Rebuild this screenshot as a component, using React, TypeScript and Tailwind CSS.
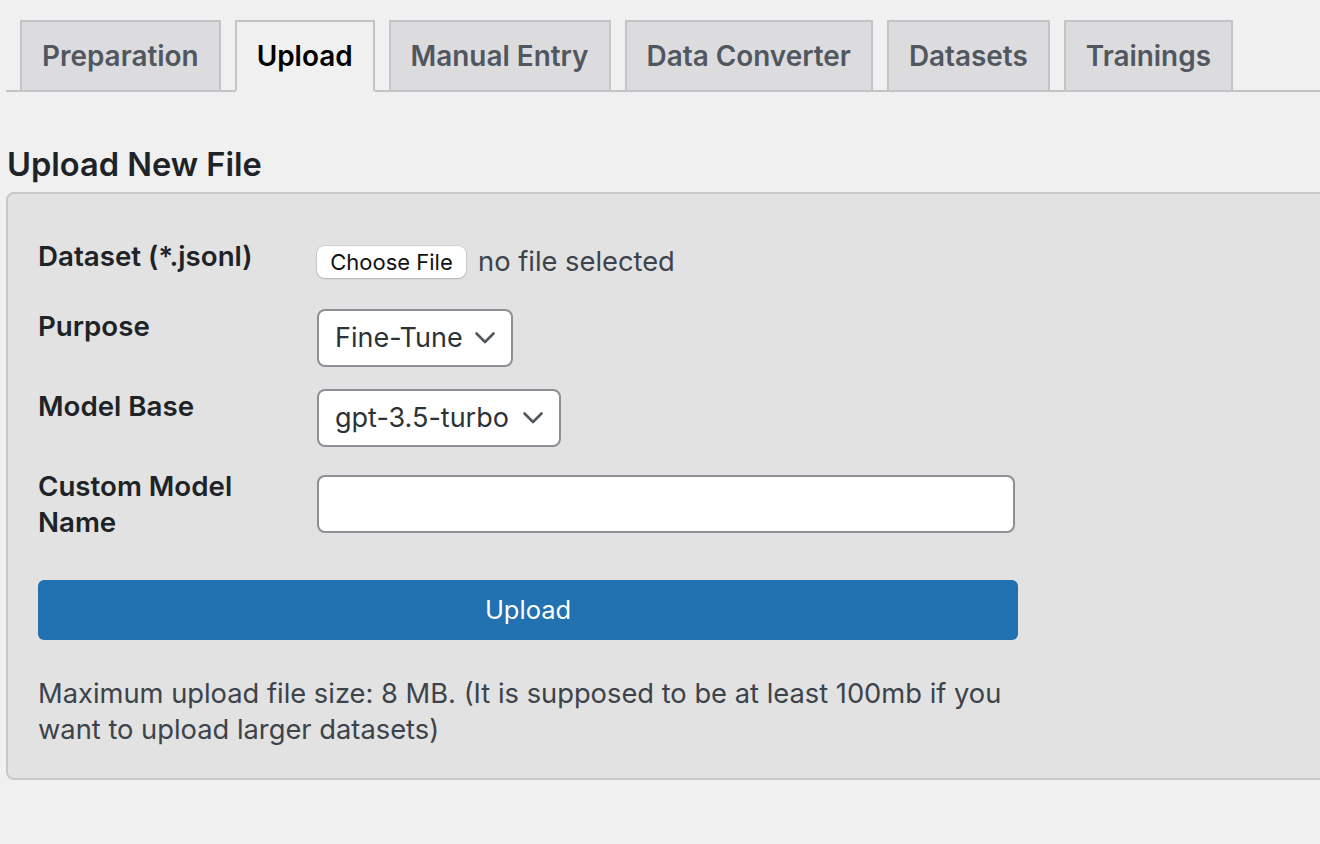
import React from 'react'

const tabs = ['Preparation', 'Upload', 'Manual Entry', 'Data Converter', 'Datasets', 'Trainings']

const Chevron = () => (
    <svg width="20" height="14" viewBox="0 0 20 14" fill="none" className="shrink-0">
        <path d="M1.5 2.5L10 11l8.5-8.5" stroke="#50575e" strokeWidth="2.6" strokeLinecap="round" strokeLinejoin="round" />
    </svg>
)

const FakeSelect = ({ value, width }: { value: string; width: string }) => (
    <div
        className={`${width} h-[58px] flex items-center justify-between bg-white border-2 border-[#8c8f94] rounded-[8px] pl-[16px] pr-[16px] text-[27px] leading-[32px] text-[#2c3338]`}
    >
        <span className="whitespace-nowrap">{value}</span>
        <Chevron />
    </div>
)

const labelCls = 'w-[279px] pr-[20px] text-[27.7px] leading-[36px] font-semibold text-[#1d2327]'

const App: React.FC = () => {
    return (
        <div
            className="w-[1320px] h-[844px] overflow-hidden bg-[#f0f0f1] pt-[20px]"
            style={{ fontFamily: 'Inter, "Noto Sans", sans-serif' }}
        >
            {/* tabs */}
            <div className="ml-[6px] flex items-end border-b-2 border-[#c3c4c7]">
                {tabs.map((t) => {
                    const active = t === 'Upload'
                    return (
                        <div
                            key={t}
                            className={
                                active
                                    ? 'ml-[14px] -mb-[2px] border-2 border-[#c3c4c7] border-b-[#f0f0f1] bg-[#f0f0f1] px-[20px] py-[10px] text-[27.9px] leading-[48px] font-semibold text-black'
                                    : 'ml-[14px] -mb-[2px] border-2 border-[#c3c4c7] bg-[#dcdcde] px-[20px] py-[10px] text-[27.9px] leading-[48px] font-semibold text-[#50575e]'
                            }
                        >
                            {t}
                        </div>
                    )
                })}
            </div>

            <h2 className="mt-[52px] ml-[7px] text-[32.6px] leading-[40px] font-semibold text-[#1d2327]">
                Upload New File
            </h2>

            {/* panel */}
            <div className="mt-[8px] ml-[6px] w-[1340px] bg-[#e2e2e2] border-2 border-[#c8c8c8] rounded-[8px] pl-[30px] pt-[44px] pb-[30px]">
                <div className="w-[980px]">
                    <div className="flex items-start">
                        <div className={labelCls}>Dataset (*.jsonl)</div>
                        <div className="mt-[8px] flex items-center">
                            <div className="w-[149px] h-[32px] flex items-center justify-center bg-white rounded-[8px] shadow-[0_0_0_1px_rgba(0,0,0,0.08),0_1px_2px_rgba(0,0,0,0.15)] text-[22px] leading-[28px] text-[#111]">
                                Choose File
                            </div>
                            <span className="ml-[12px] text-[27.3px] leading-[32px] text-[#3c434a] whitespace-nowrap">
                                no file selected
                            </span>
                        </div>
                    </div>

                    <div className="mt-[30px] flex items-start">
                        <div className={labelCls}>Purpose</div>
                        <div className="mt-[1px]">
                            <FakeSelect value="Fine-Tune" width="w-[196px]" />
                        </div>
                    </div>

                    <div className="mt-[21px] flex items-start">
                        <div className={labelCls}>Model Base</div>
                        <div className="mt-[1px]">
                            <FakeSelect value="gpt-3.5-turbo" width="w-[244px]" />
                        </div>
                    </div>

                    <div className="mt-[21px] flex items-start">
                        <div className={labelCls}>Custom Model Name</div>
                        <div className="mt-[7px] w-[698px] h-[58px] bg-white border-2 border-[#8c8f94] rounded-[8px]" />
                    </div>

                    <button className="mt-[40px] w-[980px] h-[60px] bg-[#2271b1] rounded-[6px] text-white text-[25.5px] leading-[32px]">
                        Upload
                    </button>

                    <p className="mt-[36px] text-[27.3px] leading-[36px] text-[#3c434a]">
                        Maximum upload file size: 8 MB. (It is supposed to be at least 100mb if you want to upload larger datasets)
                    </p>
                </div>
            </div>
        </div>
    )
}

export default App
